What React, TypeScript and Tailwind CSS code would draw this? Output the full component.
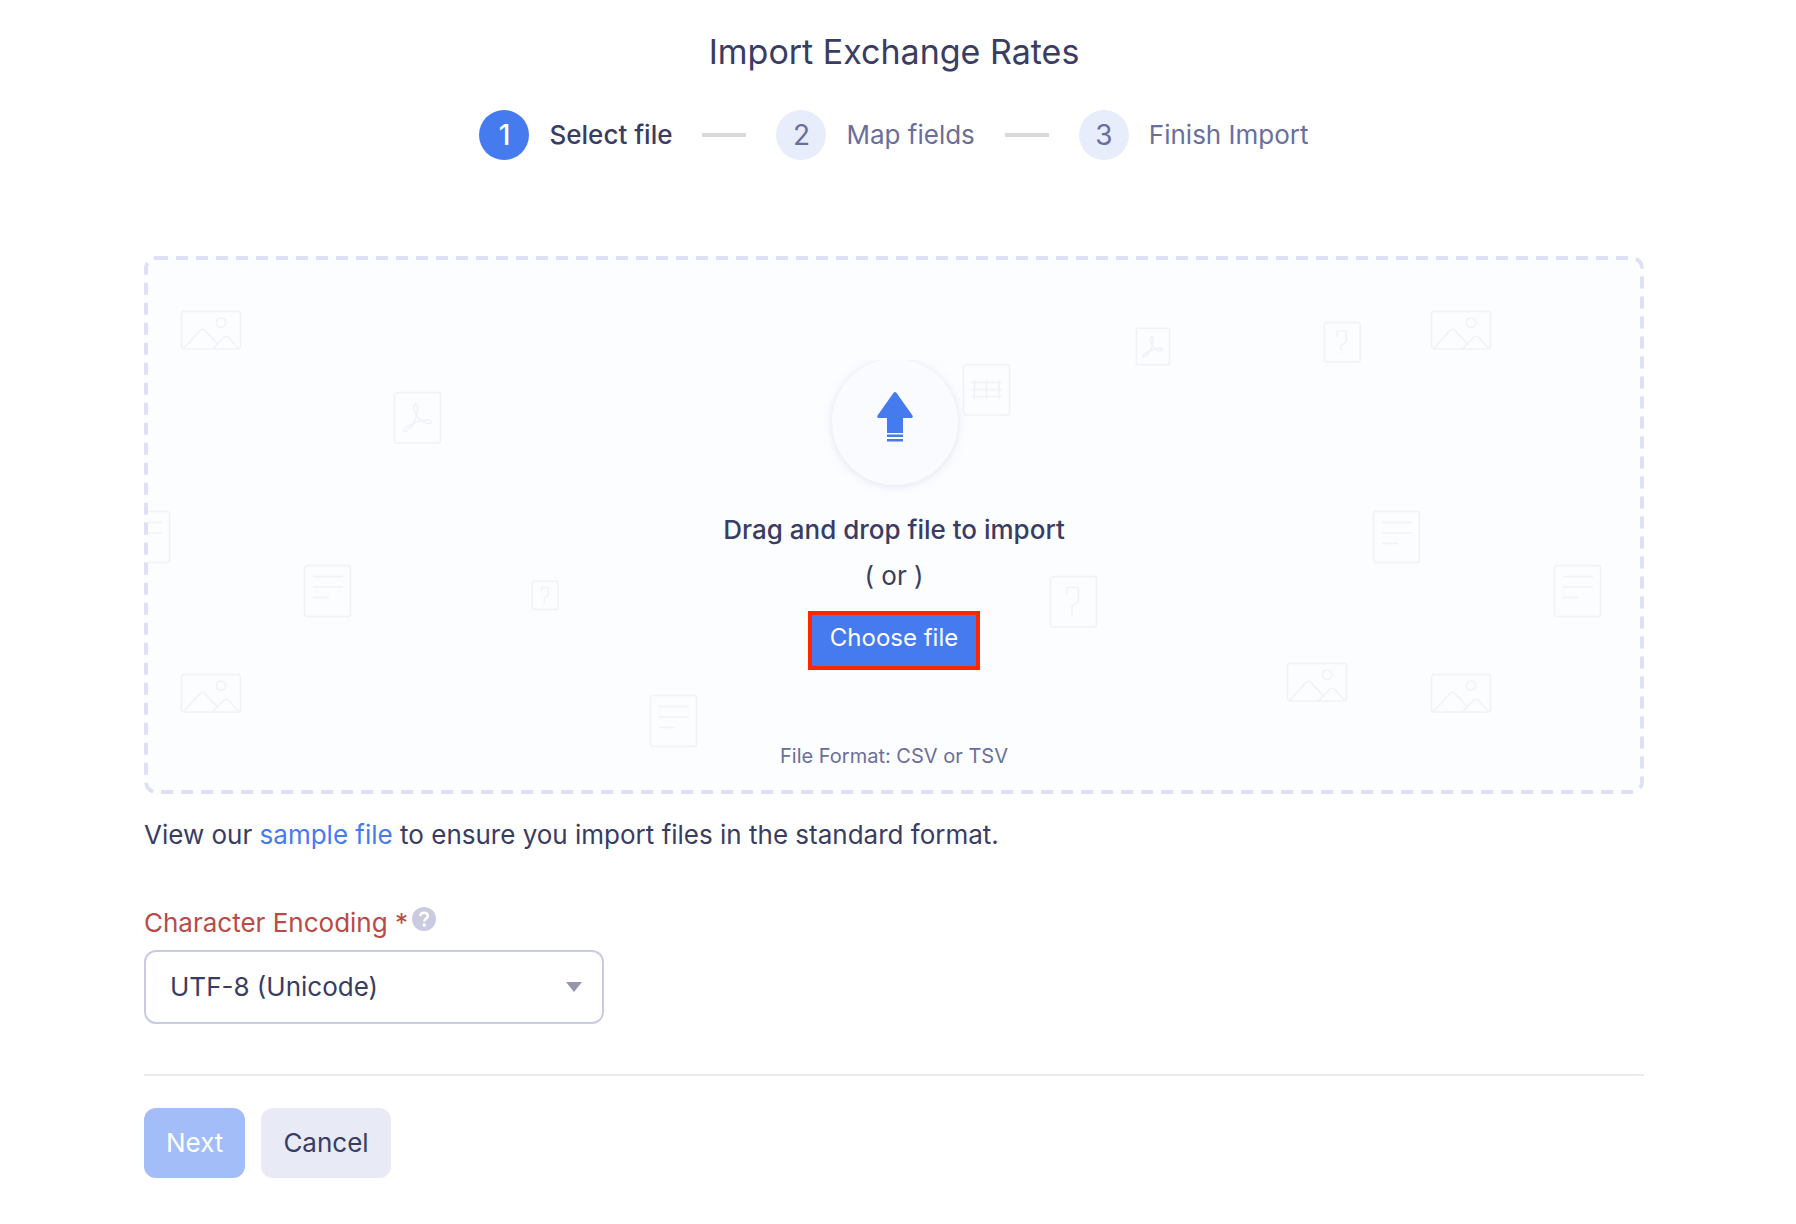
import type { ReactNode } from "react";

type Shape = "image" | "pdf" | "sheet" | "unknown" | "text";

type Doodle = {
  shape: Shape;
  x: number;
  y: number;
  scale?: number;
};

const doodles: Doodle[] = [
  { shape: "image", x: 37, y: 55 },
  { shape: "pdf", x: 250, y: 136 },
  { shape: "text", x: -21, y: 255 },
  { shape: "text", x: 160, y: 309 },
  { shape: "unknown", x: 388, y: 325, scale: 0.56 },
  { shape: "image", x: 37, y: 418 },
  { shape: "text", x: 506, y: 439 },
  { shape: "sheet", x: 819, y: 108 },
  { shape: "unknown", x: 906, y: 320 },
  { shape: "pdf", x: 992, y: 72, scale: 0.72 },
  { shape: "unknown", x: 1180, y: 66, scale: 0.78 },
  { shape: "image", x: 1287, y: 55 },
  { shape: "text", x: 1229, y: 255 },
  { shape: "text", x: 1410, y: 309 },
  { shape: "image", x: 1143, y: 407 },
  { shape: "image", x: 1287, y: 418 },
];

const shapes: Record<Shape, ReactNode> = {
  image: (
    <>
      <rect x="0.5" y="0.5" width="59" height="37.5" rx="2.5" />
      <circle cx="40" cy="11.6" r="4.7" />
      <path d="M2.5 37.5 19 19.5q2.5-2.5 5 0L36 32.5" />
      <path d="M32 37.5 42.5 26.3q2.5-2 5 0L57.5 37.5" />
    </>
  ),
  pdf: (
    <>
      <rect x="0.5" y="0.5" width="46" height="50.5" rx="2.5" />
      <path d="M21.6 12c-2.8 1.2-1.8 7 1 12 3 4.8 8.5 7.8 12.5 7.6 4-.4 2.900-3.600-2.100-3.600-5.500 0-11.500 2.300-15.500 4.300-5 2.400-8.700 5.200-8 7 1.200 1.500 5.800-1.300 9-6.300 3.600-6.200 5.300-13 5.100-17.500-.1-2.300-.8-3.800-2-3.500Z" />
    </>
  ),
  sheet: (
    <>
      <rect x="0.5" y="0.5" width="46" height="50.5" rx="2.5" />
      <path d="M8 18.5h31M8 25.5h31M8 32.5h31M11.5 16v19.5M23.5 16v19.5M36 16v19.5" />
    </>
  ),
  unknown: (
    <>
      <rect x="0.5" y="0.5" width="46" height="50.5" rx="2.5" />
      <path d="M17 18.5v-7h11.5v14l-6.5 4.5v7M22 38.5v1.5" />
    </>
  ),
  text: (
    <>
      <rect x="0.5" y="0.5" width="46" height="51" rx="2.5" />
      <path d="M9 11.5h30M9 22h30M9 32.5h16" />
    </>
  ),
};

const steps = ["Select file", "Map fields", "Finish Import"];

const Stepper = ({ current }: { current: number }) => (
  <ol className="flex items-center justify-center">
    {steps.map((label, i) => (
      <li key={label} className="flex items-center">
        {i > 0 && <span className="mx-[30px] h-1 w-11 bg-[#d9d9d9]" />}
        <span
          className={
            i === current
              ? "flex size-[50px] items-center justify-center rounded-full bg-[#457bef] text-[28px] font-medium text-white"
              : "flex size-[50px] items-center justify-center rounded-full bg-[#e8edfc] text-[28px] text-[#6b6e9c]"
          }
        >
          {i + 1}
        </span>
        <span
          className={
            i === current
              ? "ml-5 font-medium text-[#393c63]"
              : "ml-5 text-[#6b6e9c]"
          }
        >
          {label}
        </span>
      </li>
    ))}
  </ol>
);

const UploadBadge = () => (
  <svg className="h-[140px] w-[150px]" viewBox="0 0 150 140" aria-hidden="true">
    <defs>
      <filter id="badge-shadow" x="-20%" y="-20%" width="140%" height="140%">
        <feDropShadow dx="0" dy="1" stdDeviation="4" floodColor="#8f8fc4" floodOpacity="0.25" />
      </filter>
    </defs>
    <circle cx="76" cy="62" r="63" fill="#fafbff" filter="url(#badge-shadow)" />
    <g fill="#457bef">
      <path d="M74.6 32.8q1.400-1.600 2.800 0L93.500 55.500q1 2.500-1.500 2.500H84v15H68V58h-8q-2.500 0-1.500-2.500Z" />
      <path d="M68 74.5h16v2.500H68ZM68 79h16v2.500H68Z" />
    </g>
  </svg>
);

const DropZone = () => (
  <div className="relative overflow-hidden rounded-xl bg-[#fcfdff]">
    <svg className="absolute inset-0 size-full" aria-hidden="true">
      <g fill="none" stroke="#f1f1f8">
        {doodles.map(({ shape, x, y, scale = 1 }) => (
          <g
            key={`${x}-${y}`}
            transform={`translate(${x} ${y}) scale(${scale})`}
            strokeWidth={1.5 / scale}
          >
            {shapes[shape]}
          </g>
        ))}
      </g>
      <rect
        x="2"
        y="2"
        rx="10"
        className="h-[calc(100%-4px)] w-[calc(100%-4px)]"
        fill="none"
        stroke="#dee0f5"
        strokeWidth="4"
        strokeDasharray="12 8"
      />
    </svg>
    <div className="relative flex flex-col items-center pt-[104px] pb-[22px]">
      <UploadBadge />
      <p className="mt-[11px] font-medium">Drag and drop file to import</p>
      <p className="mt-2">( or )</p>
      <button
        type="button"
        className="mt-4 h-[59px] border-4 border-[#ff2600] bg-[#457bef] px-[18px] pb-1.5 text-2xl text-white"
      >
        Choose file
      </button>
      <p className="mt-[70px] text-xl leading-8 text-[#6b6e9c]">
        File Format: CSV or TSV
      </p>
    </div>
  </div>
);

export default function App() {
  return (
    <main className="min-h-screen bg-white pt-8 pr-[152px] pb-11 pl-36 font-[Inter,sans-serif] text-[26px] leading-[38px] text-[#393c63]">
      <h1 className="mb-[38px] text-center text-[34px] leading-10">
        Import Exchange Rates
      </h1>
      <Stepper current={0} />
      <form className="mt-24" onSubmit={(e) => e.preventDefault()}>
        <DropZone />
        <p className="mt-[22px]">
          View our{" "}
          <a href="#sample" className="text-[#457bef]">
            sample file
          </a>{" "}
          to ensure you import files in the standard format.
        </p>
        <div className="mt-[50px] flex items-center gap-1">
          <label htmlFor="encoding" className="text-[#b94a48]">
            Character Encoding *
          </label>
          <button type="button" aria-label="Help" className="pb-2">
            <svg className="size-6" viewBox="0 0 24 24" aria-hidden="true">
              <circle cx="12" cy="12" r="12" fill="#cacae0" />
              <path
                d="M8.2 9c.3-2.3 1.9-3.2 3.8-3.2 2.1 0 3.8 1.1 3.8 3.1 0 2.7-3.5 2.7-3.5 5.6"
                fill="none"
                stroke="#fff"
                strokeWidth="2.5"
              />
              <circle cx="12.2" cy="18" r="1.7" fill="#fff" />
            </svg>
          </button>
        </div>
        <div className="relative mt-2 w-[460px] max-w-full">
          <select
            id="encoding"
            className="h-[74px] w-full appearance-none rounded-xl border-2 border-[#cacae2] bg-white pr-16 pl-6"
          >
            <option>UTF-8 (Unicode)</option>
          </select>
          <svg
            className="pointer-events-none absolute top-8 right-[22px] h-[10px] w-4"
            viewBox="0 0 16 10"
            aria-hidden="true"
          >
            <path d="M0 0h16L8 10Z" fill="#9496b0" />
          </svg>
        </div>
        <div className="mt-[50px] flex gap-4 border-t-2 border-[#ebeaf8] pt-8">
          <button type="submit" className="h-[70px] rounded-xl bg-[#a2bdf8] px-[22px] text-white">
            Next
          </button>
          <button type="button" className="h-[70px] rounded-xl bg-[#e8eaf6] px-[22px]">
            Cancel
          </button>
        </div>
      </form>
    </main>
  );
}
